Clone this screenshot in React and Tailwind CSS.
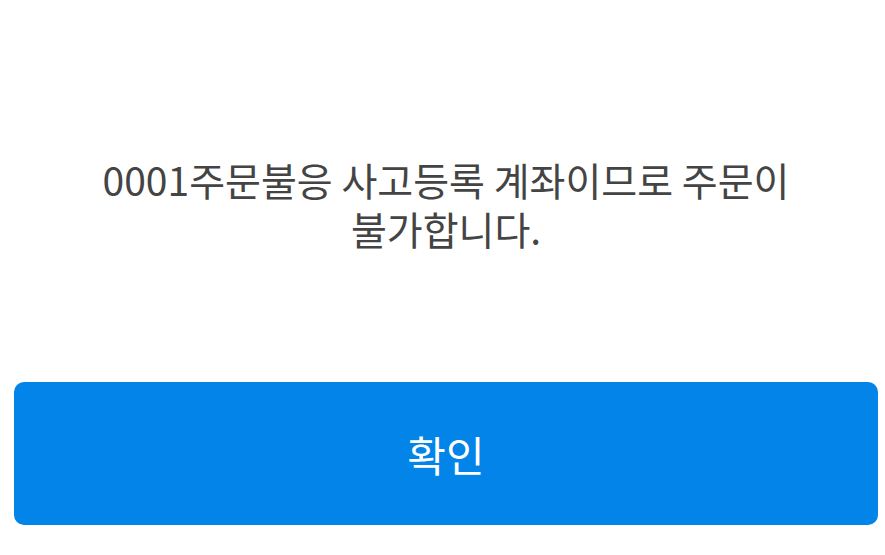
import React from "react";

function App() {
  return (
    <div
      className="w-full h-[555px] bg-white flex flex-col pl-[14px] pr-[7px] pb-[30px]"
      style={{ fontFamily: '"Noto Sans CJK KR", "Noto Sans", sans-serif' }}
    >
      {/* Message */}
      <div className="pt-[155px] flex justify-center">
        <p className="max-w-[740px] text-center text-[39px] leading-[49px] text-[#444444] break-keep">
          0001주문불응 사고등록 계좌이므로 주문이 불가합니다.
        </p>
      </div>

      {/* Confirm button */}
      <button className="mt-auto w-full h-[143px] rounded-[10px] bg-[#0284e8] text-white text-[42px] font-normal cursor-pointer">
        확인
      </button>
    </div>
  );
}

export default App;
